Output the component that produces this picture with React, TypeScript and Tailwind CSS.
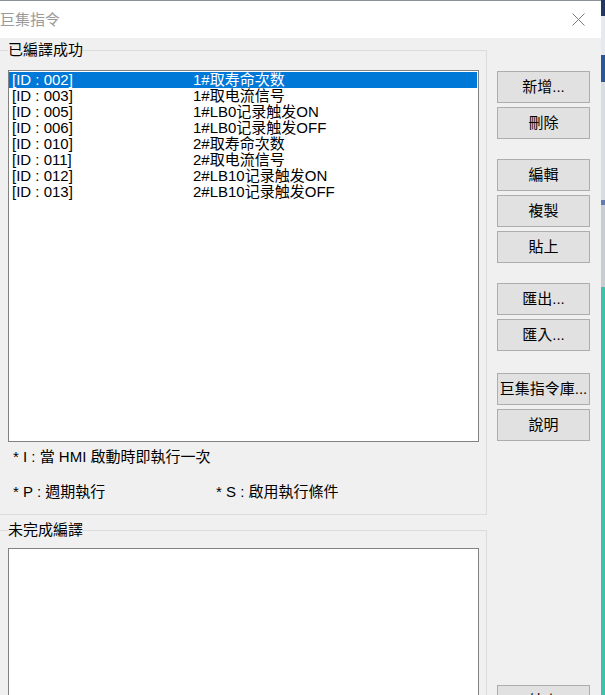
import React from 'react'

const rows = [
  { id: '002', name: '1#取寿命次数' },
  { id: '003', name: '1#取电流信号' },
  { id: '005', name: '1#LB0记录触发ON' },
  { id: '006', name: '1#LB0记录触发OFF' },
  { id: '010', name: '2#取寿命次数' },
  { id: '011', name: '2#取电流信号' },
  { id: '012', name: '2#LB10记录触发ON' },
  { id: '013', name: '2#LB10记录触发OFF' },
]

const buttons = [
  { label: '新增...', gap: false },
  { label: '刪除', gap: false },
  { label: '編輯', gap: true },
  { label: '複製', gap: false },
  { label: '貼上', gap: false },
  { label: '匯出...', gap: true },
  { label: '匯入...', gap: false },
  { label: '巨集指令庫...', gap: true },
  { label: '說明', gap: false },
]

function Button({ label, className = '' }: { label: string; className?: string }) {
  return (
    <button
      className={`h-[32px] w-[93px] shrink-0 border border-[#adadad] bg-[#e1e1e1] text-[15px] leading-[18px] text-black ${className}`}
    >
      {label}
    </button>
  )
}

export default function App() {
  return (
    <div className="flex h-[695px] w-[605px] overflow-hidden font-['Liberation_Sans','Noto_Sans_CJK_TC',sans-serif]">
      {/* dialog */}
      <div className="flex w-[601px] shrink-0 flex-col">
        <div className="flex h-[38px] shrink-0 items-center justify-between border-t border-[#8a9099] bg-white">
          <span className="text-[15px] leading-[18px] text-[#9a9a9a]">巨集指令</span>
          <svg width="13" height="13" viewBox="0 0 13 13" className="mr-[16px]">
            <path d="M0.5 0.5 L12.5 12.5 M12.5 0.5 L0.5 12.5" stroke="#7a7a7a" strokeWidth="1" fill="none" />
          </svg>
        </div>

        <div className="flex flex-1 bg-[#f0f0f0]">
          {/* left groups */}
          <div className="ml-[-1px] flex w-[488px] shrink-0 flex-col">
            <fieldset className="mt-[3px] h-[474px] border border-[#dcdcdc]">
              <legend className="ml-[8px] px-0 text-[15px] leading-[18px] text-black">已編譯成功</legend>
              <div className="ml-[8px] mt-[11px] h-[372px] w-[471px] border border-[#828282] bg-white pt-px pr-px">
                {rows.map((r, i) => (
                  <div
                    key={r.id}
                    className={`flex h-[16px] items-center pl-[3px] text-[15px] leading-[16px] ${
                      i === 0 ? 'bg-[#0078d7] text-white' : 'text-black'
                    }`}
                  >
                    <span className="w-[181px] shrink-0">[ID : {r.id}]</span>
                    <span>{r.name}</span>
                  </div>
                ))}
              </div>
              <div className="ml-[13px] mt-[6px] text-[15px] leading-[18px] text-black">
                <div>* I : 當 HMI 啟動時即執行一次</div>
                <div className="mt-[17px] flex">
                  <span className="w-[203px] shrink-0">* P : 週期執行</span>
                  <span>* S : 啟用執行條件</span>
                </div>
              </div>
            </fieldset>

            <fieldset className="mt-[6px] h-[300px] border border-[#dcdcdc]">
              <legend className="ml-[8px] px-0 text-[15px] leading-[18px] text-black">未完成編譯</legend>
              <div className="ml-[8px] mt-[9px] h-[260px] w-[471px] border border-[#828282] bg-white" />
            </fieldset>
          </div>

          {/* right buttons */}
          <div className="ml-[10px] flex flex-col pt-[33px]">
            {buttons.map((b, i) => (
              <Button
                key={b.label}
                label={b.label}
                className={i === 0 ? '' : b.gap ? (i === 7 ? 'mt-[22px]' : 'mt-[20px]') : 'mt-[4px]'}
              />
            ))}
            <Button label="結束" className="mt-[244px]" />
          </div>
        </div>
      </div>

      {/* window behind */}
      <div className="flex w-[4px] shrink-0 flex-col">
        <div className="h-[16px] bg-[#1f3a5f]" />
        <div className="h-[39px] bg-[#e6e9ee]" />
        <div className="h-[27px] bg-[#2b5797]" />
        <div className="h-[118px] bg-[#d8dde3]" />
        <div className="h-[5px] bg-[#5b7fb0]" />
        <div className="h-[82px] bg-[#c8cdd3]" />
        <div className="flex-1 bg-[#3fbfad]" />
      </div>
    </div>
  )
}
